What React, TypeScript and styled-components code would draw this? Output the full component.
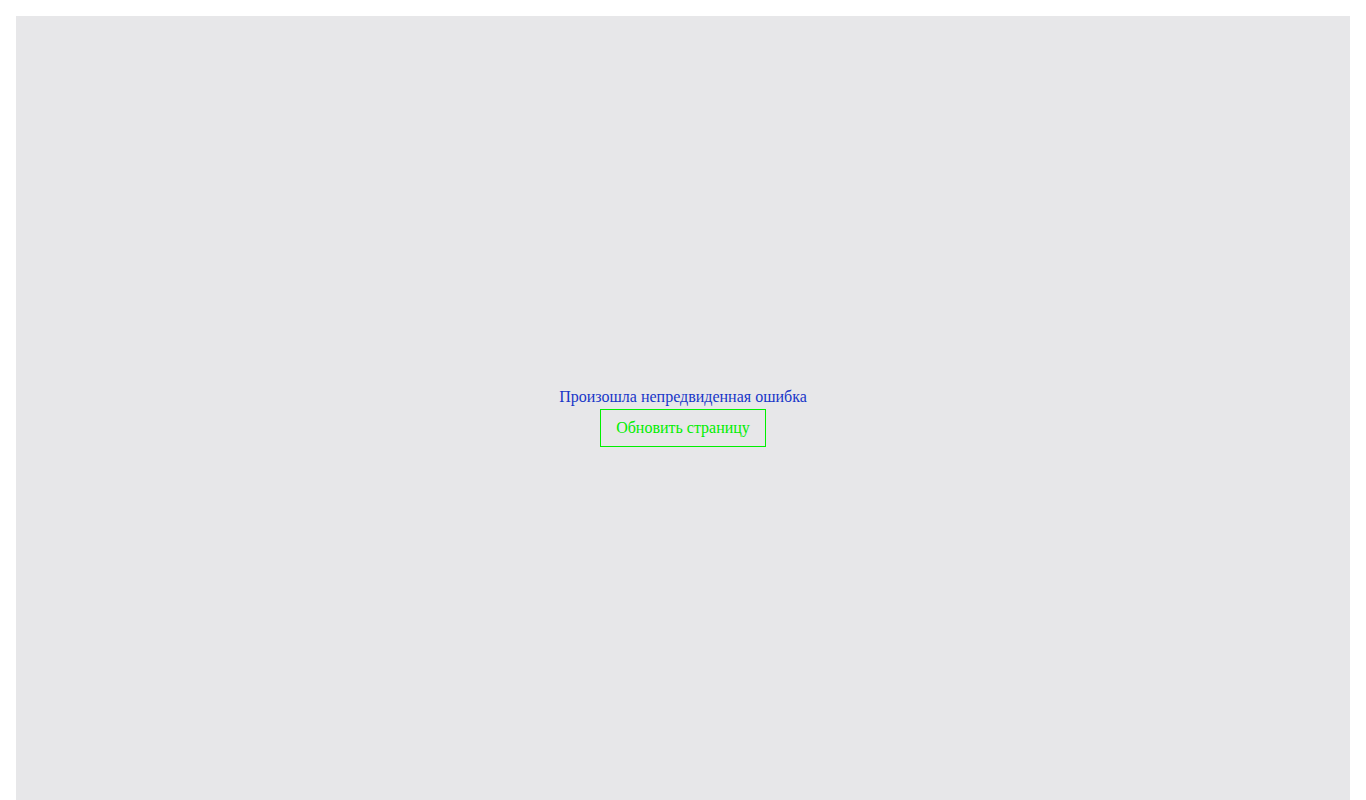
import React from 'react';
import styled, { createGlobalStyle } from 'styled-components';

const GlobalStyle = createGlobalStyle`
  body {
    margin: 16px;
    font-family: "Liberation Serif", "Times New Roman", serif;
    background: #ffffff;
  }
`;

const Screen = styled.div`
  min-height: 100vh;
  box-sizing: border-box;
  padding-top: 3px;
  background-color: #e7e7e9;
  display: flex;
  flex-direction: column;
  align-items: center;
  justify-content: center;
  gap: 3px;
`;

const Message = styled.div`
  font-size: 16px;
  color: #1836c8;
`;

const ReloadButton = styled.button`
  font-family: inherit;
  font-size: 16px;
  color: #00ee00;
  background: transparent;
  border: 1px solid #00f000;
  padding: 9px 15px;
  line-height: 18px;
  cursor: pointer;
`;

const App = () => {
  return (
    <>
      <GlobalStyle />
      <Screen>
        <Message>Произошла непредвиденная ошибка</Message>
        <ReloadButton onClick={() => window.location.reload()}>Обновить страницу</ReloadButton>
      </Screen>
    </>
  );
};

export default App;
